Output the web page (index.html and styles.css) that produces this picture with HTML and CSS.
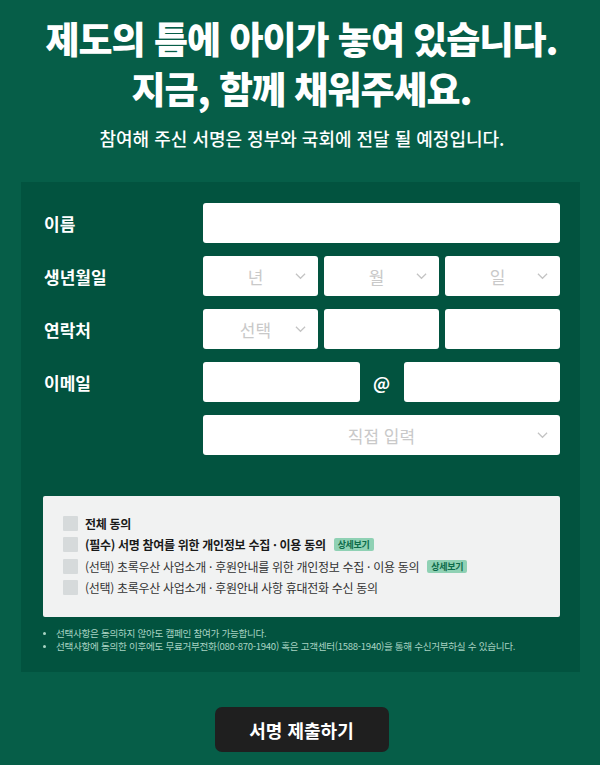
FILE: index.html
```html
<!DOCTYPE html>
<html lang="ko">
<head>
<meta charset="utf-8">
<link rel="stylesheet" href="styles.css">
</head>
<body>
<header class="hero">
  <h1 class="title">제도의 틈에 아이가 놓여 있습니다.<br>지금, 함께 채워주세요.</h1>
  <p class="subtitle">참여해 주신 서명은 정부와 국회에 전달 될 예정입니다.</p>
</header>
<section class="panel">
  <div class="row">
    <div class="label">이름</div>
    <div class="fields"><div class="input full"></div></div>
  </div>
  <div class="row">
    <div class="label">생년월일</div>
    <div class="fields three">
      <div class="input select"><span class="ph">년</span><svg class="chev" viewBox="0 0 12 8"><path d="M1 1.5 6 6.5 11 1.5"/></svg></div>
      <div class="input select"><span class="ph">월</span><svg class="chev" viewBox="0 0 12 8"><path d="M1 1.5 6 6.5 11 1.5"/></svg></div>
      <div class="input select"><span class="ph">일</span><svg class="chev" viewBox="0 0 12 8"><path d="M1 1.5 6 6.5 11 1.5"/></svg></div>
    </div>
  </div>
  <div class="row">
    <div class="label">연락처</div>
    <div class="fields three">
      <div class="input select"><span class="ph">선택</span><svg class="chev" viewBox="0 0 12 8"><path d="M1 1.5 6 6.5 11 1.5"/></svg></div>
      <div class="input"></div>
      <div class="input"></div>
    </div>
  </div>
  <div class="row">
    <div class="label">이메일</div>
    <div class="fields email">
      <div class="input"></div>
      <span class="at">@</span>
      <div class="input"></div>
    </div>
  </div>
  <div class="row">
    <div class="label"></div>
    <div class="fields"><div class="input select wide"><span class="ph">직접 입력</span><svg class="chev" viewBox="0 0 12 8"><path d="M1 1.5 6 6.5 11 1.5"/></svg></div></div>
  </div>

  <div class="consent">
    <div class="check bold"><span class="box"></span>전체 동의</div>
    <div class="check bold"><span class="box"></span>(필수) 서명 참여를 위한 개인정보 수집 · 이용 동의<span class="badge">상세보기</span></div>
    <div class="check"><span class="box"></span>(선택) 초록우산 사업소개 · 후원안내를 위한 개인정보 수집 · 이용 동의<span class="badge">상세보기</span></div>
    <div class="check"><span class="box"></span>(선택) 초록우산 사업소개 · 후원안내 사항 휴대전화 수신 동의</div>
  </div>
  <ul class="notes">
    <li>선택사항은 동의하지 않아도 캠페인 참여가 가능합니다.</li>
    <li>선택사항에 동의한 이후에도 무료거부전화(080-870-1940) 혹은 고객센터(1588-1940)을 통해 수신거부하실 수 있습니다.</li>
  </ul>
</section>
<div class="actions">
  <button class="submit">서명 제출하기</button>
</div>
</body>
</html>
```
FILE: styles.css
```css
* { box-sizing: border-box; }
html, body { margin: 0; padding: 0; }
body {
  background: #065e48;
  font-family: "Noto Sans CJK KR", "Noto Sans", sans-serif;
  color: #fff;
  width: 600px;
  height: 765px;
  overflow: hidden;
}
.hero { text-align: center; padding-top: 13px; }
.title {
  margin: 0;
  font-size: 37px;
  line-height: 50px;
  font-weight: 900;
  letter-spacing: -1px;
  padding-left: 3px;
}
.subtitle {
  margin: 13px 0 0;
  font-size: 18px;
  line-height: 24px;
  font-weight: 500;
  letter-spacing: 0;
  padding-left: 4px;
}
.panel {
  margin: 32px 20px 0 21px;
  background: #02533f;
  padding: 21px 20px 20px 22px;
  height: 490px;
}
.row { display: flex; align-items: center; margin-bottom: 13px; }
.label {
  width: 160px;
  flex: none;
  font-size: 17px;
  font-weight: 700;
  padding-left: 1px;
}
.fields { flex: 1; display: flex; align-items: center; gap: 6px; }
.fields.three > .input { flex: 1; }
.fields.email { gap: 0; }
.fields.email > .input { flex: 1; }
.at { width: 44px; text-align: center; font-size: 17px; font-weight: 700; }
.input {
  height: 40px;
  background: #fff;
  border-radius: 3px;
  position: relative;
}
.input.full { flex: 1; }
.input.wide { flex: 1; }
.select { display: flex; align-items: center; justify-content: center; }
.ph { color: #c9c9c9; font-size: 17px; padding-right: 10px; }
.wide .ph { padding-right: 0; }
.chev {
  position: absolute;
  right: 12px;
  top: 16px;
  width: 11px;
  height: 8px;
  fill: none;
  stroke: #c4c4c4;
  stroke-width: 1.3;
}
.consent {
  margin-top: 41px;
  background: #f1f2f2;
  border-radius: 2px;
  padding: 17px 20px 19px 20px;
  color: #222;
}
.check {
  display: flex;
  align-items: center;
  font-size: 12px;
  line-height: 21.3px;
  letter-spacing: -0.3px;
  color: #333;
}
.check.bold { font-weight: 700; color: #1a1a1a; }
.box {
  width: 15px;
  height: 15px;
  background: #d6dadb;
  border-radius: 1px;
  margin-right: 7px;
  flex: none;
}
.badge {
  margin-left: 8px;
  background: #8fd1b4;
  color: #0d6b4a;
  font-size: 9px;
  font-weight: 700;
  line-height: 13px;
  padding: 0 4px;
  border-radius: 2px;
}
.notes {
  margin: 10px 0 0;
  padding: 0 0 0 13px;
  font-size: 9.6px;
  line-height: 13px;
  color: #a9d4c3;
  letter-spacing: -0.3px;
}
.notes li::marker { font-size: 8px; }
.actions { display: flex; justify-content: center; padding-top: 35px; padding-left: 3px; }
.submit {
  width: 174px;
  height: 45px;
  background: #1f1f1f;
  border: none;
  border-radius: 7px;
  color: #fff;
  font-family: inherit;
  font-size: 18px;
  font-weight: 700;
}
```
